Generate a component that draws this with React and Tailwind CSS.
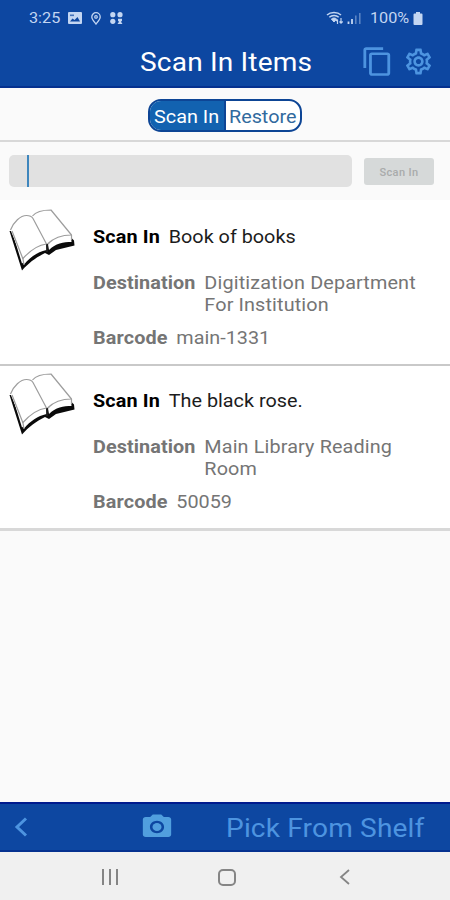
import React, { useState } from "react"
import { MdContentCopy, MdOutlineSettings, MdPhotoCamera } from "react-icons/md"

const items = [
  {
    title: "Book of books",
    destination: "Digitization Department For Institution",
    barcode: "main-1331",
  },
  {
    title: "The black rose.",
    destination: "Main Library Reading Room",
    barcode: "50059",
  },
]

function StatusBar() {
  return (
    <div className="flex h-9 items-center pl-[29px] pr-[27px] text-[#c3d6f2]">
      <span className="w-[31px] origin-left scale-x-108 text-[15px] leading-none">3:25</span>
      <svg className="ml-[8px] h-[12px] w-[14px]" viewBox="0 0 14 12">
        <rect width="14" height="12" rx="1" fill="currentColor" />
        <path d="M2 9.5l2.5-3 2 1.6L9.5 5 12 9.5z" fill="#0d47a1" />
        <path d="M2 2.5h4v1.6H2z" fill="#0d47a1" opacity=".7" />
      </svg>
      <svg className="ml-[9px] h-[13px] w-[10px]" viewBox="0 0 10 13" fill="none" stroke="currentColor">
        <path d="M5 12C3 9.400.8 7.200.8 4.900a4.200 4.200 0 018.400 0C9.200 7.200 7 9.400 5 12z" strokeWidth="1.300" />
        <circle cx="5" cy="4.900" r="1.300" strokeWidth="1.200" />
      </svg>
      <svg className="ml-[9px] h-[12px] w-[13px]" viewBox="0 0 13 12" fill="currentColor">
        <circle cx="2.800" cy="2.700" r="2.600" />
        <circle cx="10" cy="2.700" r="2.600" />
        <circle cx="2.800" cy="9.300" r="2.600" />
        <path d="M8 6.800h4v2l-1 1 1.500 2.200H7.500L9 9.800l-1-1z" />
      </svg>

      <svg className="ml-auto h-[14px] w-[35px]" viewBox="0 0 35 14" fill="none" stroke="currentColor">
        <path d="M1 4c3.500-3.300 10.500-3.300 14 0M3.300 6.300c2.500-2.300 7-2.300 9.400 0" strokeWidth="1.500" />
        <path d="M5.400 8c1.500-1.300 3.700-1.300 5.200 0L8 11z" fill="currentColor" />
        <path d="M11.500 13V8.500M10 10l1.500-1.700M15 7v5M13.500 10.500L15 12.200l1.700-1.700" strokeWidth="1.200" />
        <path d="M22.500 13v-2.500M26 13V8" strokeWidth="1.800" />
        <path d="M29.800 13V4.500M33.800 13V2" strokeWidth="1.500" opacity=".45" />
      </svg>
      <span className="ml-[9px] w-[40px] origin-left scale-x-108 text-[15px] leading-none">100%</span>
      <svg className="ml-[3px] h-[13px] w-[10px]" viewBox="0 0 10 13" fill="currentColor">
        <path d="M3 0h4v1.500h1.500a1 1 0 011 1V12a1 1 0 01-1 1h-7a1 1 0 01-1-1V2.500a1 1 0 011-1H3z" />
      </svg>
    </div>
  )
}

function BookIcon() {
  return (
    <svg className="h-[64px] w-[68px]" viewBox="8 208 68 64" strokeLinejoin="round">
      {/* cover */}
      <path d="M9.500 231L22 270.500c7-8 14-13 23-17.500l4 2 7-5 18.500-4.500-.5-5-2-2-24 5-26 20L12 231z" fill="#0a0a0a" />
      {/* page blocks */}
      <path d="M11.500 231L23 259c7-8 15-14 23-15l.5 6c-9 2-16 7-22.500 14.500z" fill="#fff" />
      <path d="M48 244.500c7-7 14-9 23-9l.5 6.500c-8 0-16 1.500-22.500 8z" fill="#fff" />
      {/* open pages */}
      <path d="M10.500 230c3-8 10-14.500 16-14.500 3 0 5 .5 6.500 3L46.500 244c-8 1-17 7-24 15z" fill="#fff" />
      <path d="M32.500 216c4-5 11-6 18.500-6l20.500 25c-9 0-17 2-24 9z" fill="#fff" />
      <g fill="none" stroke="#9d9d9d" strokeWidth="1.200">
        <path d="M10.500 230c3-8 10-14.500 16-14.500 3 0 5 .5 6.500 3L46.500 244c-8 1-17 7-24 15" />
        <path d="M32.500 216c4-5 11-6 18.500-6l20.500 25c-9 0-17 2-24 9" />
        <path d="M12 231l11 28 1 6" />
        <path d="M71.500 235v5" />
      </g>
      <path d="M47 244v8" stroke="#222" strokeWidth="1.500" />
    </svg>
  )
}

function Item({ item }) {
  return (
    <div className="flex h-[164px] border-b-2 border-[#c9c9c9] pl-[8px] pt-[6px] last:h-[165px] last:border-b-3 last:border-[#d8d8d8]">
      <BookIcon />
      <div className="ml-[17px] w-[310px] origin-left scale-x-110 pt-[18px] text-[18px] leading-[22px] text-[#757575]">
        <div className="flex gap-[8px] text-[#1c1c1c]">
          <b className="tracking-[0.12px] text-black">Scan In</b>
          <span>{item.title}</span>
        </div>
        <div className="mt-[24px] flex gap-[8px]">
          <b className="tracking-[0.08px]">Destination</b>
          <span className="w-[202px] tracking-[0.12px]">{item.destination}</span>
        </div>
        <div className="mt-[11px] flex gap-[8px]">
          <b className="tracking-[0.12px]">Barcode</b>
          <span>{item.barcode}</span>
        </div>
      </div>
    </div>
  )
}

export default function App() {
  const [barcode, setBarcode] = useState("")

  return (
    <div className="flex h-[900px] w-[450px] flex-col overflow-hidden bg-[#fafafa] font-[Roboto,sans-serif]">
      <header className="h-[88px] shrink-0 border-b-2 border-[#05318f] bg-[#0d47a1]">
        <StatusBar />
        <div className="flex h-[50px] items-center pl-[140px]">
          <h1 className="w-[222px] origin-left scale-x-108 pt-[2px] text-[26px] leading-none tracking-[0.15px] text-white">Scan In Items</h1>
          <svg className="h-[31px] w-[31px] text-[#4d94e0]" viewBox="1 0 22 24" preserveAspectRatio="none">
            <MdContentCopy size={24} />
          </svg>
          <MdOutlineSettings className="ml-[10px] h-[31px] w-[31px] text-[#4d94e0]" />
        </div>
      </header>

      <div className="flex h-[54px] shrink-0 justify-center border-b-2 border-[#d8d8d8] pt-[11px]">
        <div className="flex h-[33px] w-[154px] overflow-hidden rounded-[13px] border-2 border-[#0d4595] bg-white text-[18px] leading-[31px]">
          <div className="w-[74px] bg-[#1262b0] text-center text-white">
            <span className="inline-block scale-x-110">Scan In</span>
          </div>
          <div className="flex-1 border-l-2 border-[#0d4595] text-center text-[#316a9e]">
            <span className="inline-block scale-x-110">Restore</span>
          </div>
        </div>
      </div>

      <div className="flex h-[58px] shrink-0 items-center pl-[9px]">
        <div className="flex h-[32px] w-[343px] items-center rounded-[5px] bg-[#e1e1e1] pl-[18px]">
          <div className="h-[32px] w-[2px] bg-[#3e86bd]" />
          <input
            className="h-full flex-1 bg-transparent outline-none"
            value={barcode}
            onChange={(e) => setBarcode(e.target.value)}
          />
        </div>
        <button className="ml-[12px] mt-[1px] h-[27px] w-[70px] rounded-[3px] bg-[#d6d9d9] pt-[3px] text-[11px] font-medium tracking-[0.4px] text-[#a9abab]">
          Scan In
        </button>
      </div>

      <div className="shrink-0 bg-white pt-[2px]">
        {items.map((item) => (
          <Item key={item.barcode} item={item} />
        ))}
      </div>

      <footer className="mt-auto flex h-[50px] shrink-0 items-center border-y-2 border-[#001b8e] border-b-[#05318f] bg-[#0d47a1] text-[#4d94e0]">
        <svg className="ml-[14px] h-[20px] w-[14px]" viewBox="0 0 14 20" fill="none" stroke="currentColor" strokeWidth="3">
          <path d="M12 1.500L3 10l9 8.500" />
        </svg>
        <svg className="ml-[112px] h-[30px] w-[34px] text-[#519fde]" viewBox="0 0 24 24" preserveAspectRatio="none">
          <MdPhotoCamera size={24} />
        </svg>
        <span className="ml-[52px] origin-left scale-x-108 whitespace-nowrap pt-[2px] text-[26px] leading-none tracking-[0.15px]">
          Pick From Shelf
        </span>
      </footer>

      <nav className="flex h-[48px] shrink-0 items-center bg-[#f0f0f0] pt-[2px] text-[#858585]">
        <svg className="ml-[101px] h-[16px] w-[18px]" viewBox="0 0 18 16" fill="none" stroke="currentColor" strokeWidth="2">
          <path d="M2 0v16M9 0v16M16 0v16" />
        </svg>
        <div className="ml-[99px] h-[17px] w-[18px] rounded-[5px] border-2 border-[#858585]" />
        <svg className="ml-[103px] h-[16px] w-[11px]" viewBox="0 0 11 16" fill="none" stroke="currentColor" strokeWidth="1.800">
          <path d="M10 1L2 8l8 7" />
        </svg>
      </nav>
    </div>
  )
}
